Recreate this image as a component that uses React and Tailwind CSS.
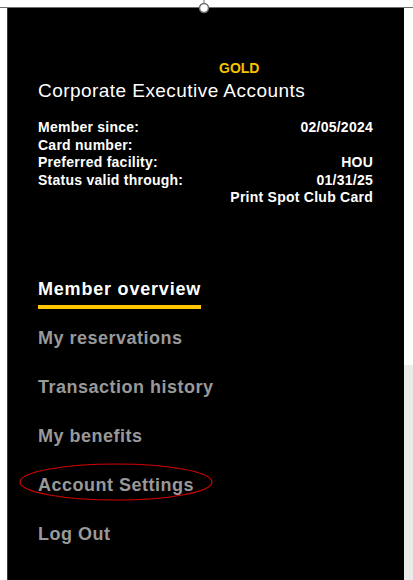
import React from "react";

const rows = [
  ["Member since:", "02/05/2024"],
  ["Card number:", ""],
  ["Preferred facility:", "HOU"],
  ["Status valid through:", "01/31/25"],
  ["", "Print Spot Club Card"],
];

const nav = ["My reservations", "Transaction history", "My benefits", "Account Settings", "Log Out"];

export default function App() {
  return (
    <div className="relative w-[413px] h-[580px] bg-white overflow-hidden font-['Liberation_Sans',Arial,sans-serif]">
      <div className="h-[7px]" />
      <div className="h-px bg-[#6e6e6e]" />
      <div className="flex h-[572px]">
        <div className="w-[7px]" />
        <div className="w-[397px] bg-black border-l border-[#3a3a3a] pt-[52px] pl-[30px] pr-[31px]">
          <div className="ml-[181px] text-[14px] leading-[17px] font-bold text-[#f7c300]">GOLD</div>
          <div className="mt-[3px] text-[19px] leading-[22px] tracking-[0.45px] text-white">
            Corporate Executive Accounts
          </div>
          <div className="mt-[17px] text-[14px] leading-[17.6px] font-bold tracking-[0.25px] text-white">
            {rows.map(([k, v], i) => (
              <div key={i} className="flex justify-between">
                <span>{k}</span>
                <span>{v}</span>
              </div>
            ))}
          </div>
          <div className="mt-[71px] flex flex-col text-[18px] leading-[22px] font-bold tracking-[0.5px]">
            <div className="h-[49px]">
              <div className="inline-flex flex-col">
                <span className="text-white tracking-[0.8px]">Member overview</span>
                <span className="mt-[5px] h-[4px] bg-[#ffc800]" />
              </div>
            </div>
            {nav.map((n) => (
              <div key={n} className="h-[49px] text-[#999999]">
                {n}
              </div>
            ))}
          </div>
        </div>
        <div className="flex-1 flex flex-col">
          <div className="h-[357px]" />
          <div className="flex-1 bg-[#ebebeb]" />
        </div>
      </div>
      <svg className="absolute left-0 top-0" width="413" height="580" viewBox="0 0 413 580" fill="none">
        <line x1="204" y1="0" x2="204" y2="3.5" stroke="#6e6e6e" strokeWidth="1" />
        <circle cx="204" cy="8" r="4.5" fill="#ffffff" stroke="#6e6e6e" strokeWidth="1.5" />
        <ellipse cx="116" cy="482" rx="96" ry="18" stroke="#d40000" strokeWidth="1.2" />
      </svg>
    </div>
  );
}
